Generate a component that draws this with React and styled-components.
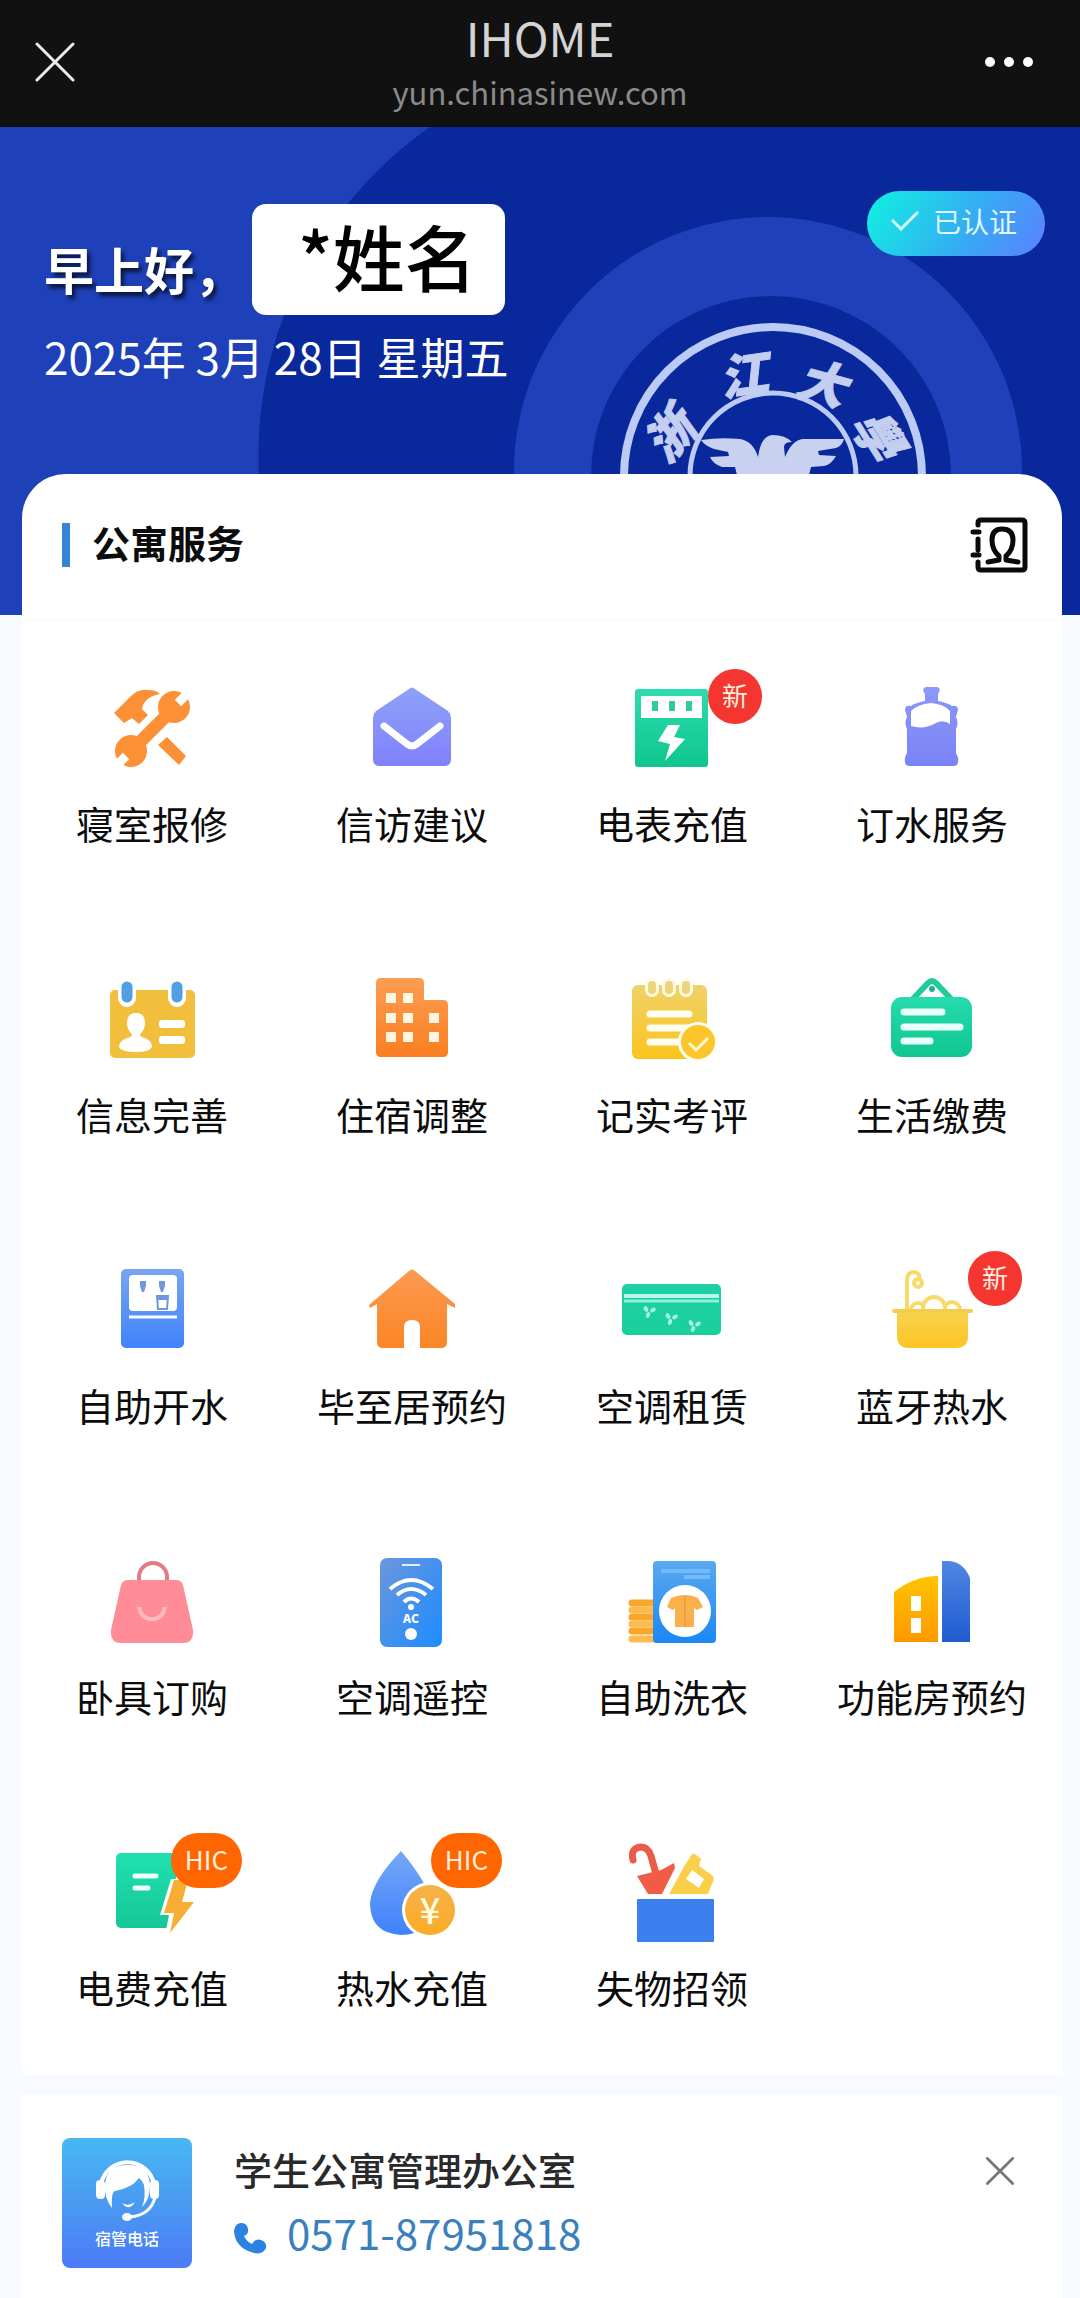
import React, { useState } from "react";
import styled, { createGlobalStyle } from "styled-components";

const GlobalStyle = createGlobalStyle`
  * {
    box-sizing: border-box;
  }

  body {
    margin: 0;
    background: #f7fafe;
    font-family: "Noto Sans CJK SC", "Liberation Sans", sans-serif;
    color: #0c0c0c;
  }

  button {
    border: none;
    padding: 0;
    background: none;
    font: inherit;
    cursor: pointer;
  }

  a {
    color: inherit;
    text-decoration: none;
  }

  svg {
    display: block;
    flex-shrink: 0;
  }
`;

/* ---------- top bar ---------- */

const TopBar = styled.header`
  display: grid;
  grid-template-columns: 120px 1fr 120px;
  align-items: center;
  height: 127px;
  padding-bottom: 3px;
  background: #111111;
`;

const BarButton = styled.button`
  display: flex;
  justify-content: ${(props) => (props.$end ? "flex-end" : "flex-start")};
  padding: ${(props) => (props.$end ? "0 46px 0 0" : "0 0 0 35px")};
`;

const BarTitle = styled.div`
  text-align: center;
`;

const AppName = styled.h1`
  margin: 0;
  font-size: 47px;
  font-weight: 400;
  line-height: 60px;
  color: #d4d4d4;
`;

const SiteUrl = styled.p`
  margin: 0;
  font-size: 31px;
  line-height: 50px;
  color: #8a8a8a;
`;

/* ---------- hero ---------- */

const Hero = styled.section`
  position: relative;
  display: flex;
  justify-content: space-between;
  align-items: flex-start;
  min-height: 488px;
  padding: 64px 35px 0 44px;
  background: #1e41b9;
  overflow: hidden;
`;

const HeroBackground = styled.svg`
  position: absolute;
  inset: 0;
  width: 100%;
  height: 100%;
`;

const HeroText = styled.div`
  position: relative;
  padding-top: 13px;
  color: #ffffff;
`;

const GreetingRow = styled.div`
  display: flex;
  align-items: flex-end;
  gap: 8px;
`;

const Greeting = styled.span`
  font-size: 50px;
  font-weight: 700;
  line-height: 94px;
  text-shadow: 3px 4px 4px rgba(0, 0, 0, 0.7);
`;

const NameBox = styled.span`
  padding: 0 28px 10px 46px;
  border-radius: 14px;
  background: #ffffff;
  color: #000000;
  font-size: 72px;
  font-weight: 500;
  line-height: 101px;
`;

const DateLine = styled.p`
  margin: 11px 0 0;
  font-size: 44px;
  line-height: 60px;
`;

const Verified = styled.span`
  position: relative;
  display: flex;
  align-items: center;
  gap: 14px;
  height: 65px;
  padding: 0 28px 6px 24px;
  border-radius: 33px;
  background: linear-gradient(120deg, #12ece2 5%, #38a8f4 60%, #5d80ff);
  color: #dcf8ff;
  font-size: 28px;
`;

/* ---------- services ---------- */

const ServiceCard = styled.section`
  position: relative;
  margin: -141px 18px 0 22px;
  border-radius: 44px 44px 0 0;
  background: #ffffff;
`;

const CardHeader = styled.div`
  display: flex;
  align-items: center;
  justify-content: space-between;
  height: 146px;
  padding: 0 34px 4px 40px;
  border-bottom: 1px solid #f8f8f8;
`;

const CardTitle = styled.h2`
  display: flex;
  align-items: flex-start;
  gap: 22px;
  margin: 0;
  font-size: 38px;
  font-weight: 700;
  line-height: 38px;

  &::before {
    content: "";
    width: 8px;
    height: 44px;
    background: #3585d6;
  }
`;

const ServiceGrid = styled.nav`
  display: grid;
  grid-template-columns: repeat(4, 1fr);
`;

const ServiceItem = styled.a`
  display: flex;
  flex-direction: column;
  align-items: center;
  gap: 12px;
  padding: 53px 0 60px;
`;

const IconBox = styled.span`
  position: relative;
  width: 120px;
  height: 110px;
`;

const Badge = styled.span`
  position: absolute;
  top: -4px;
  right: -30px;
  padding: 0 14px 4px;
  border-radius: 28px;
  background: ${(props) => (props.$orange ? "#ff6600" : "#f43530")};
  color: #ffeedd;
  font-size: 26px;
  line-height: 51px;
  white-space: nowrap;
`;

const ServiceLabel = styled.span`
  font-size: 38px;
  line-height: 56px;
  white-space: nowrap;
`;

/* ---------- contact ---------- */

const ContactCard = styled.section`
  display: flex;
  align-items: flex-start;
  gap: 42px;
  margin: 20px 18px 0 22px;
  padding: 43px 48px 30px 40px;
  background: #ffffff;
`;

const Avatar = styled.div`
  display: flex;
  flex-direction: column;
  align-items: center;
  width: 130px;
  height: 130px;
  border-radius: 8px;
  background: linear-gradient(#47b8f3, #4a9af2 50%, #4d7af6);
  color: #ffffff;
  font-size: 16px;
  font-weight: 500;
  line-height: 24px;
`;

const ContactText = styled.div`
  flex: 1;
`;

const ContactName = styled.h3`
  margin: 0;
  font-size: 38px;
  font-weight: 500;
  line-height: 62px;
  color: #2a2a2a;
`;

const PhoneLink = styled.a`
  display: flex;
  align-items: center;
  gap: 20px;
  font-size: 42px;
  line-height: 64px;
  color: #3a80bd;
`;

const DismissButton = styled.button`
  display: flex;
  align-items: center;
  height: 66px;
`;

/* ---------- drawings ---------- */

const Gradient = ({ id, from, to, diagonal }) => (
  <linearGradient id={id} x1="0" y1="0" x2={diagonal ? "1" : "0"} y2="1">
    <stop offset="0" stopColor={from} />
    <stop offset="1" stopColor={to} />
  </linearGradient>
);

const CampusBackground = () => (
  <HeroBackground
    viewBox="0 0 1080 488"
    preserveAspectRatio="xMidYMin slice"
    aria-hidden="true"
  >
    <path d="M430 0A402 402 0 0 0 291 488H1080V0Z" fill="#08289c" />
    <circle cx="768" cy="344" r="254" fill="#1e41b9" />
    <circle cx="771" cy="349" r="180" fill="#08289c" />
    <g fill="none" stroke="#bccbf5">
      <circle cx="773" cy="349" r="149" strokeWidth="8" />
      <circle cx="773" cy="349" r="83" strokeWidth="5" />
    </g>
    <path
      d="M701 313Q720 310 740 312Q753 314 758 330Q761 308 773 308Q785 308 792 315Q784 315 784 320L785 330Q792 313 803 312H844Q842 319 836 321L818 324L819 328L836 329Q831 338 824 339L811 340L809 348H737L735 340H722Q713 337 710 330L729 329L728 325L714 322Q705 319 701 313Z"
      fill="#c8d1ef"
    />
    <g
      fill="#c3cef0"
      stroke="#c3cef0"
      strokeWidth="1"
      fontSize="48"
      fontWeight="900"
      fontStyle="italic"
      textAnchor="middle"
      dominantBaseline="central"
    >
      <text x="667" y="306" transform="rotate(-50 667 306)">浙</text>
      <text x="743" y="245" transform="rotate(-8 743 245)">江</text>
      <text x="823" y="253" transform="rotate(15 823 253)">大</text>
      <text x="880" y="306" transform="rotate(58 880 306)">學</text>
    </g>
  </HeroBackground>
);

const CrossIcon = ({ size, color, weight }) => (
  <svg width={size} height={size} viewBox="0 0 40 40" aria-hidden="true">
    <path
      d="M2 2L38 38M38 2L2 38"
      stroke={color}
      strokeWidth={weight}
      strokeLinecap="round"
    />
  </svg>
);

const AddressBookIcon = () => (
  <svg width="58" height="56" viewBox="0 0 58 56" aria-hidden="true">
    <g fill="none" stroke="#0a0a0a" strokeWidth="5" strokeLinecap="round" strokeLinejoin="round">
      <path d="M8 8V6Q8 3 11 3H52Q55 3 55 6V50Q55 53 52 53H11Q8 53 8 50V45" />
      <path d="M8 22V33M3 15H9M3 38H9" />
      <path d="M18 45L29 43V39Q22 33 22 23Q22 12 32 12Q43 12 43 23Q43 33 36 39V43L48 45" />
    </g>
  </svg>
);

const PhoneIcon = () => (
  <svg width="33" height="45" viewBox="0 -12 33 45" aria-hidden="true">
    <path
      d="M6 1Q13 0 14 7Q15 12 10 14Q12 19 18 22Q21 16 27 18Q33 20 32 26Q29 33 20 31Q1 26 0 9Q1 2 6 1Z"
      fill="#2c82e0"
    />
  </svg>
);

const OperatorIcon = () => (
  <svg width="130" height="88" viewBox="0 0 130 88" aria-hidden="true">
    <path d="M39 46A27 27 0 0 1 92 46" fill="none" stroke="#fff" strokeWidth="4" />
    <path
      d="M43 47Q44 27 66 27Q87 27 88 47Q88 62 80 69Q84 60 82 47Q80 42 77 40Q70 50 53 53Q49 54 50 70Q42 60 43 47Z"
      fill="#fff"
    />
    <rect x="34" y="42" width="9" height="19" rx="4" fill="#fff" />
    <rect x="88" y="42" width="9" height="19" rx="4" fill="#fff" />
    <path d="M93 59Q89 77 68 79" fill="none" stroke="#fff" strokeWidth="3" />
    <ellipse cx="65" cy="79" rx="5" ry="4" fill="#fff" />
    <path d="M60 65Q66 69 73 64Q67 74 60 65Z" fill="#fff" />
  </svg>
);

const icons = {
  repair: (
    <>
      <g fill="#fc9037">
        <path d="M22 40L38 24Q46 15 57 17Q64 17 68 21Q52 24 50 36L56 42L47 51L40 45L32 50Z" />
        <circle cx="82" cy="34" r="16" />
        <circle cx="39" cy="78" r="16" />
        <path d="M75 64L94 83L87 92L66 72Z" />
      </g>
      <path d="M42 75L80 37" stroke="#fc9037" strokeWidth="13" />
      <path d="M86 30L100 16M34 83L20 97" stroke="#fff" strokeWidth="9" />
    </>
  ),
  letter: (
    <>
      <Gradient id="letter" from="#8ea2f8" to="#8080fb" />
      <path
        d="M57 16Q60 13 63 16L96 38Q99 41 99 45V86Q99 93 92 93H28Q21 93 21 86V45Q21 41 24 38Z"
        fill="url(#letter)"
      />
      <path
        d="M32 53L55 71Q60 75 65 71L88 53"
        fill="none"
        stroke="#fff"
        strokeWidth="7"
        strokeLinecap="round"
      />
    </>
  ),
  meter: (
    <>
      <Gradient id="meter" from="#2cdcad" to="#0fc68e" />
      <rect x="23" y="16" width="73" height="78" rx="3" fill="url(#meter)" />
      <rect x="29" y="23" width="61" height="22" fill="#fff" />
      <path d="M43 28V38M60 28V38M77 28V38" stroke="#31c99f" strokeWidth="6" />
      <path d="M56 52H68L62 64L73 66L53 88L58 71L46 68Z" fill="#fff" />
    </>
  ),
  bottle: (
    <>
      <Gradient id="bottle" from="#8c98fa" to="#7a83f6" />
      <path
        d="M53 28V21Q49 15 54 14H65Q70 15 66 21V28Q76 30 80 33Q86 32 86 37L84 44Q87 50 84 56V80Q87 85 86 89Q86 93 81 93H38Q33 93 33 89Q32 85 35 80V56Q32 50 35 44L33 37Q33 32 39 33Q43 30 53 28Z"
        fill="url(#bottle)"
      />
      <path d="M39 38Q46 31 59 30Q72 31 78 38V51Q71 46 64 50Q52 57 39 53Z" fill="#fff" />
    </>
  ),
  profile: (
    <>
      <rect x="18" y="26" width="85" height="68" rx="5" fill="#f2bf3c" />
      <path d="M35 22V34M85 22V34" stroke="#fff" strokeWidth="18" strokeLinecap="round" />
      <path d="M35 23V33M85 23V33" stroke="#529fe2" strokeWidth="11" strokeLinecap="round" />
      <path
        d="M44 49Q53 49 53 59Q53 66 48 70Q48 73 53 74Q60 77 60 83Q58 88 44 88Q29 88 27 83Q27 77 35 74Q40 73 40 70Q35 66 35 59Q35 49 44 49Z"
        fill="#fff"
      />
      <rect x="67" y="56" width="26" height="8" rx="3" fill="#fff" />
      <rect x="67" y="72" width="26" height="8" rx="3" fill="#fff" />
    </>
  ),
  building: (
    <>
      <Gradient id="building" from="#fd9d53" to="#fa7f20" />
      <path
        d="M29 14H67Q72 14 72 19V36H91Q96 36 96 41V88Q96 93 91 93H29Q24 93 24 88V19Q24 14 29 14Z"
        fill="url(#building)"
      />
      <path
        d="M34 34H44M51 34H61M34 54H44M51 54H61M77 54H87M34 73H44M51 73H61M77 73H87"
        stroke="#fff6e2"
        strokeWidth="10"
      />
    </>
  ),
  notes: (
    <>
      <Gradient id="notes" from="#efd269" to="#fbc41c" />
      <rect x="20" y="21" width="75" height="74" rx="6" fill="url(#notes)" />
      <path d="M40 21V26M57 21V26M74 21V26" stroke="#fffbe3" strokeWidth="14" strokeLinecap="round" />
      <path d="M40 21V26M57 21V26M74 21V26" stroke="#ecd47c" strokeWidth="8" strokeLinecap="round" />
      <path
        d="M38 50H77M38 64H77M38 78H70"
        stroke="#fffdf0"
        strokeWidth="7"
        strokeLinecap="round"
      />
      <circle cx="86" cy="78" r="20" fill="#fffdf0" />
      <circle cx="86" cy="78" r="17" fill="#fac62c" />
      <path d="M77 79L84 86L96 74" fill="none" stroke="#fff8d0" strokeWidth="3" />
    </>
  ),
  bill: (
    <>
      <Gradient id="bill" from="#26dbad" to="#10c690" />
      <path d="M40 36L56 19Q60 15 64 19L80 36" fill="none" stroke="#22cb9e" strokeWidth="6" />
      <circle cx="60" cy="25" r="3" fill="#22ae8a" />
      <rect x="19" y="33" width="81" height="60" rx="11" fill="url(#bill)" />
      <path
        d="M32 48H70M32 63H88M32 77H58"
        stroke="#e9fff9"
        strokeWidth="7"
        strokeLinecap="round"
      />
    </>
  ),
  boiler: (
    <>
      <Gradient id="boiler" from="#78a5ee" to="#3f84fd" />
      <rect x="29" y="14" width="63" height="79" rx="5" fill="url(#boiler)" />
      <rect x="37" y="20" width="48" height="36" rx="4" fill="#fff" />
      <path d="M37 62H85" stroke="#fff" strokeWidth="3" />
      <path d="M48 26H54V31L52 37H50L48 31ZM67 26H73V31L71 37H69L67 31Z" fill="#6f99dc" />
      <path d="M65 41H76L75 54H66Z" fill="none" stroke="#6b98e0" strokeWidth="2" />
      <path d="M66 42H76V45H66Z" fill="#6b98e0" />
    </>
  ),
  house: (
    <>
      <Gradient id="house" from="#fc9a52" to="#fb8524" />
      <path
        d="M57 16Q60 13 63 16L103 49V53L95 49V87Q95 93 89 93H68V72Q68 65 60 65Q52 65 52 72V93H31Q25 93 25 87V49L18 53L17 50Z"
        fill="url(#house)"
      />
    </>
  ),
  aircon: (
    <>
      <Gradient id="aircon" from="#1fd0a2" to="#1bcf9d" />
      <rect x="10" y="29" width="99" height="51" rx="5" fill="url(#aircon)" />
      <path d="M12 41H107" stroke="#b2fbe8" strokeWidth="4" />
      <path d="M12 46H107" stroke="#8ff3d8" strokeWidth="3" />
      {[[37, 56], [59, 63], [82, 70]].map(([x, y]) => (
        <g key={x} fill="#a6f6e1" transform={`translate(${x} ${y})`}>
          <ellipse cx="-3" cy="-2" rx="2" ry="3" transform="rotate(-30 -3 -2)" />
          <ellipse cx="4" cy="-1" rx="2" ry="3" transform="rotate(60 4 -1)" />
          <ellipse cx="-1" cy="4" rx="2" ry="3" transform="rotate(15 -1 4)" />
        </g>
      ))}
    </>
  ),
  bath: (
    <>
      <Gradient id="bath" from="#f8d34f" to="#fdc424" />
      <g fill="none" stroke="#f7da69" strokeWidth="4">
        <path d="M35 56V25Q35 17 42 17Q49 18 47 25" />
        <circle cx="46" cy="28" r="4" />
        <circle cx="46" cy="55" r="7" />
        <circle cx="80" cy="55" r="8" />
        <circle cx="62" cy="53" r="11" fill="#fff" />
      </g>
      <path d="M25 56H96V81Q96 93 84 93H37Q25 93 25 81Z" fill="url(#bath)" />
      <path d="M22 56H99" stroke="#f4cd4e" strokeWidth="4" strokeLinecap="round" />
    </>
  ),
  bag: (
    <>
      <path d="M47 36V31A14 14 0 0 1 75 31V36" fill="none" stroke="#e37a85" strokeWidth="4" />
      <path
        d="M36 34H84Q89 34 91 39L101 84Q102 97 91 97H29Q18 97 19 84L29 39Q31 34 36 34Z"
        fill="#ff8c96"
      />
      <path d="M47 61Q49 73 60 73Q71 73 73 61" fill="none" stroke="#ffbcc0" strokeWidth="4" />
    </>
  ),
  remote: (
    <>
      <Gradient id="remote" from="#6c96dc" to="#1c8cff" diagonal />
      <rect x="28" y="12" width="62" height="89" rx="7" fill="url(#remote)" />
      <path d="M50 19H68" stroke="#d9f1ff" strokeWidth="2" />
      <g fill="none" stroke="#fff" strokeWidth="4">
        <path d="M38 43Q59 25 81 43" />
        <path d="M45 49Q59 37 74 49" />
        <path d="M52 56Q59 49 67 56" />
      </g>
      <circle cx="59" cy="61" r="3" fill="#fff" />
      <text x="59" y="77" fontSize="12" fontWeight="900" textAnchor="middle" fill="#fff">
        AC
      </text>
      <circle cx="59" cy="88" r="6" fill="#fff" />
    </>
  ),
  laundry: (
    <>
      <Gradient id="laundry" from="#5aa8ee" to="#1b87f5" />
      <path
        d="M20 57H42M20 71H42M20 85H42"
        stroke="#f9a62a"
        strokeWidth="7"
        strokeLinecap="round"
      />
      <path
        d="M20 64H42M20 78H42M20 93H42"
        stroke="#fdbb50"
        strokeWidth="7"
        strokeLinecap="round"
      />
      <rect x="41" y="15" width="63" height="82" rx="4" fill="url(#laundry)" />
      <path d="M49 25H98M72 31H98" stroke="#72b9fa" strokeWidth="4" />
      <circle cx="73" cy="65" r="26" fill="#fff" />
      <path
        d="M65 50Q73 48 81 50L86 52L91 61L85 64L82 62V81H63V62L61 64L55 61L59 52Z"
        fill="#fbb04c"
      />
      <path d="M73 50V81" stroke="#dc9440" strokeWidth="1" />
    </>
  ),
  rooms: (
    <>
      <Gradient id="rooms" from="#ffc400" to="#ff9900" />
      <Gradient id="tower" from="#5286e4" to="#1d5bce" />
      <path d="M22 46Q42 30 66 30V96H22Z" fill="url(#rooms)" />
      <path d="M39 50H49V65H39ZM39 72H49V87H39Z" fill="#fff" />
      <path d="M70 15H78Q92 17 98 32V96H70Z" fill="url(#tower)" />
    </>
  ),
  power: (
    <>
      <Gradient id="power" from="#20e0b0" to="#16c796" />
      <rect x="24" y="16" width="60" height="75" rx="5" fill="url(#power)" />
      <path d="M43 39H64M43 51H56" stroke="#e9fff8" strokeWidth="5" strokeLinecap="round" />
      <path d="M79 42L68 78H77L74 93H92V42Z" fill="#fff" />
      <path d="M82 43H96L90 65H102L78 96L82 76H72Z" fill="#f8ad34" />
    </>
  ),
  water: (
    <>
      <Gradient id="water" from="#76a7f6" to="#3f82fc" />
      <Gradient id="coin" from="#f5b149" to="#fcab25" />
      <path d="M49 14Q79 50 79 68Q79 98 49 98Q18 96 18 66Q20 44 49 14Z" fill="url(#water)" />
      <circle cx="78" cy="73" r="28" fill="#fff" />
      <circle cx="78" cy="73" r="25" fill="url(#coin)" />
      <text x="78" y="87" fontSize="36" fontWeight="500" textAnchor="middle" fill="#fffbe0">
        ¥
      </text>
    </>
  ),
  lost: (
    <>
      <rect x="25" y="62" width="77" height="43" rx="1" fill="#3c80f0" />
      <path
        d="M21 23Q18 11 29 10Q36 10 39 19L44 37"
        fill="none"
        stroke="#e85c4a"
        strokeWidth="7"
        strokeLinecap="round"
      />
      <path d="M25 39L41 35L49 33L62 26L63 31L50 57H36Z" fill="#f05c45" />
      <path
        d="M80 17L83 17L89 22L87 29L101 39L102 42L96 57H57L73 28Z"
        fill="#fbcf4a"
      />
      <path d="M80 33L92 42L87 51L74 42Z" fill="#fff" />
    </>
  ),
};

const services = [
  { icon: "repair", label: "寝室报修" },
  { icon: "letter", label: "信访建议" },
  { icon: "meter", label: "电表充值", badge: "新" },
  { icon: "bottle", label: "订水服务" },
  { icon: "profile", label: "信息完善" },
  { icon: "building", label: "住宿调整" },
  { icon: "notes", label: "记实考评" },
  { icon: "bill", label: "生活缴费" },
  { icon: "boiler", label: "自助开水" },
  { icon: "house", label: "毕至居预约" },
  { icon: "aircon", label: "空调租赁" },
  { icon: "bath", label: "蓝牙热水", badge: "新" },
  { icon: "bag", label: "卧具订购" },
  { icon: "remote", label: "空调遥控" },
  { icon: "laundry", label: "自助洗衣" },
  { icon: "rooms", label: "功能房预约" },
  { icon: "power", label: "电费充值", badge: "HIC" },
  { icon: "water", label: "热水充值", badge: "HIC" },
  { icon: "lost", label: "失物招领" },
];

const Service = ({ icon, label, badge }) => (
  <ServiceItem href={`#${icon}`}>
    <IconBox>
      <svg width="120" height="110" viewBox="0 0 120 110" aria-hidden="true">
        {icons[icon]}
      </svg>
      {badge && <Badge $orange={badge === "HIC"}>{badge}</Badge>}
    </IconBox>
    <ServiceLabel>{label}</ServiceLabel>
  </ServiceItem>
);

const App = () => {
  const [showContact, setShowContact] = useState(true);

  return (
    <>
      <GlobalStyle />
      <TopBar>
        <BarButton aria-label="关闭">
          <CrossIcon size={40} color="#ececec" weight={3} />
        </BarButton>
        <BarTitle>
          <AppName>IHOME</AppName>
          <SiteUrl>yun.chinasinew.com</SiteUrl>
        </BarTitle>
        <BarButton $end aria-label="更多">
          <svg width="50" height="12" viewBox="0 0 50 12" fill="#fff" aria-hidden="true">
            <circle cx="6" cy="6" r="5" />
            <circle cx="25" cy="6" r="5" />
            <circle cx="44" cy="6" r="5" />
          </svg>
        </BarButton>
      </TopBar>

      <main>
        <Hero>
          <CampusBackground />
          <HeroText>
            <GreetingRow>
              <Greeting>早上好，</Greeting>
              <NameBox>*姓名</NameBox>
            </GreetingRow>
            <DateLine>2025年 3月 28日 星期五</DateLine>
          </HeroText>
          <Verified>
            <svg width="28" height="20" viewBox="0 0 28 20" aria-hidden="true">
              <path d="M1 9L10 18L27 1" fill="none" stroke="#d4fbff" strokeWidth="3" />
            </svg>
            已认证
          </Verified>
        </Hero>

        <ServiceCard>
          <CardHeader>
            <CardTitle>公寓服务</CardTitle>
            <button aria-label="通讯录">
              <AddressBookIcon />
            </button>
          </CardHeader>
          <ServiceGrid>
            {services.map((service) => (
              <Service key={service.icon} {...service} />
            ))}
          </ServiceGrid>
        </ServiceCard>

        {showContact && (
          <ContactCard>
            <Avatar>
              <OperatorIcon />
              宿管电话
            </Avatar>
            <ContactText>
              <ContactName>学生公寓管理办公室</ContactName>
              <PhoneLink href="tel:0571-87951818">
                <PhoneIcon />
                0571-87951818
              </PhoneLink>
            </ContactText>
            <DismissButton aria-label="关闭" onClick={() => setShowContact(false)}>
              <CrossIcon size={28} color="#777777" weight={4} />
            </DismissButton>
          </ContactCard>
        )}
      </main>
    </>
  );
};

export default App;
